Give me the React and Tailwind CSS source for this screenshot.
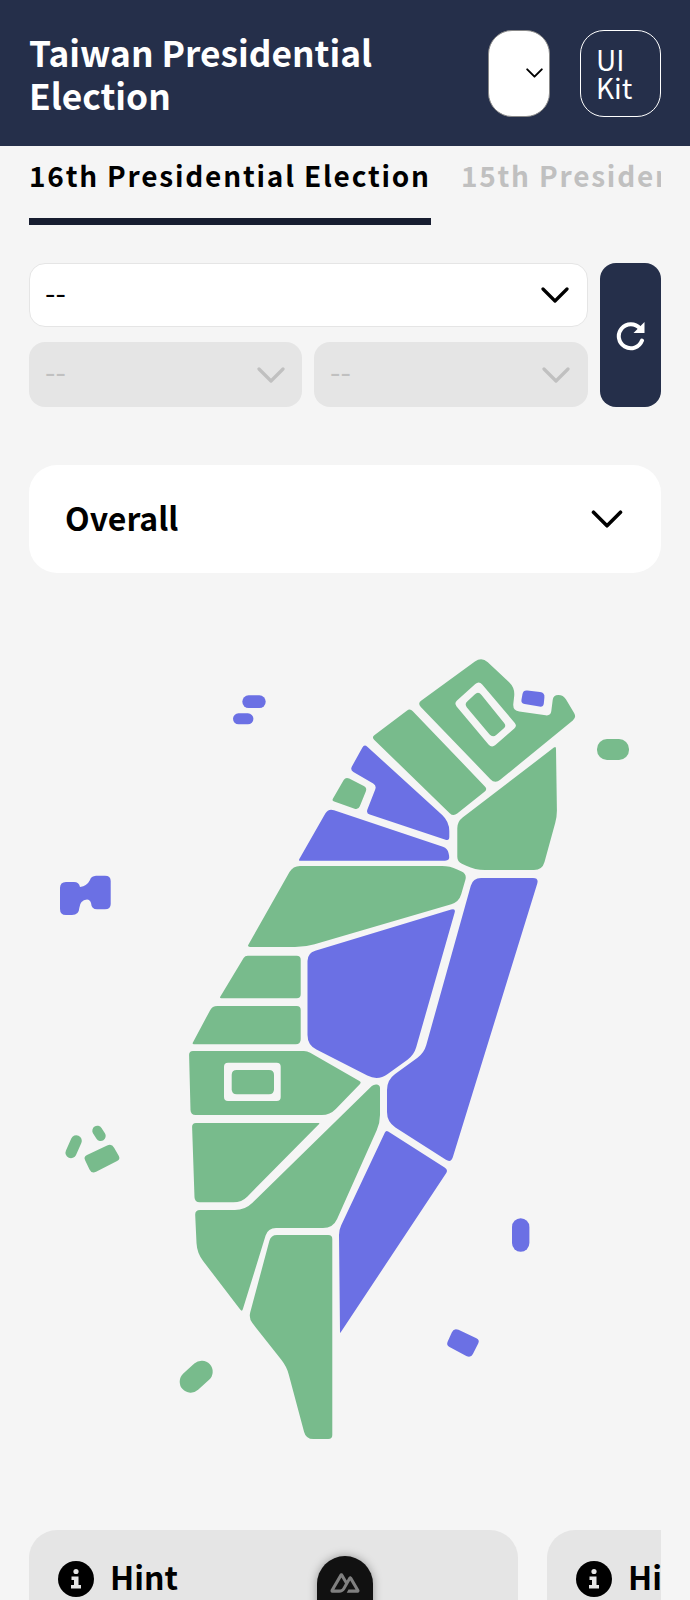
import React from "react";

const GREEN = "#78bb8c";
const BLUE = "#6b70e4";

// points are [x, y, radius], read off a crop at scale s with origin ox, oy
function poly(pts, ox = 0, oy = 0, s = 1) {
  const p = pts.map(([x, y, r]) => [ox + x / s, oy + y / s, r / s]);
  let d = "";
  p.forEach((cur, i) => {
    const prev = p[(i - 1 + p.length) % p.length];
    const next = p[(i + 1) % p.length];
    const l1 = Math.hypot(prev[0] - cur[0], prev[1] - cur[1]);
    const l2 = Math.hypot(next[0] - cur[0], next[1] - cur[1]);
    const r = Math.min(cur[2], l1 / 2, l2 / 2);
    const ax = cur[0] + ((prev[0] - cur[0]) * r) / l1;
    const ay = cur[1] + ((prev[1] - cur[1]) * r) / l1;
    const bx = cur[0] + ((next[0] - cur[0]) * r) / l2;
    const by = cur[1] + ((next[1] - cur[1]) * r) / l2;
    d += `${i === 0 ? "M" : "L"}${ax.toFixed(1)} ${ay.toFixed(1)} Q${cur[0].toFixed(1)} ${cur[1].toFixed(1)} ${bx.toFixed(1)} ${by.toFixed(1)} `;
  });
  return d + "Z";
}

const north = poly([[712,190,15],[905,50,25],[1005,143,25],[998,212,20],[1112,228,15],[1120,165,20],[1150,165,25],[1190,232,15],[945,432,20]], 180, 640, 3);
const northHole = poly([[822,190,12],[897,122,15],[1012,258,12],[935,325,15]], 180, 640, 3);
const northInner = poly([[853,193,12],[895,153,15],[980,258,12],[938,294,15]], 180, 640, 3);
const row3 = poly([[57,393,12],[412,393,10],[575,487,8],[480,585,25],[62,585,15]], 170, 920, 3);
const row3Hole = poly([[162,428,12],[332,428,12],[332,543,12],[162,543,12]], 170, 920, 3);
const row3Inner = poly([[185,450,15],[312,450,15],[312,523,15],[185,523,15]], 170, 920, 3);

const greens = [
  poly([[575,292,10],[690,205,12],[923,448,12],[820,530,15]], 180, 640, 3),
  poly([[497,410,12],[562,443,12],[535,510,12],[455,482,8]], 180, 640, 3),
  poly([[1128,318,8],[1131,530,20],[1087,690,25],[885,690,30],[832,665,15],[832,545,20]], 180, 640, 3),
  poly([[293,866,7],[450,866,8],[467,874,6],[459,902,8],[305,947,10],[247,947,3]]),
  poly([[225,107,8],[392,107,12],[392,235,12],[148,235,6]], 170, 920, 3),
  poly([[127,258,15],[392,258,12],[392,373,15],[66,373,6]], 170, 920, 3),
  poly([[66,9,12],[450,9,4],[215,247,25],[74,247,15]], 170, 1120, 3),
  poly([[195,1210,5],[245,1210,10],[374,1084,8],[380,1085,6],[380,1123,8],[333,1228,10],[268,1228,8],[242,1312,3],[197,1253,10]]),
  poly([[303,345,18],[487,345,12],[487,957,12],[408,957,22],[350,740,25],[236,595,18]], 170, 1120, 3),
  poly([[130,170,12],[215,130,15],[242,178,12],[155,222,15]], 40, 1100, 3),
];

const blues = [
  poly([[553,312,12],[808,545,30],[808,603,12],[558,520,12],[590,437,12],[510,390,12]], 180, 640, 3),
  poly([[445,505,18],[803,625,15],[810,662,15],[355,662,5]], 180, 640, 3),
  poly([[473,878,8],[539,878,6],[451,1163,6],[387,1122,10],[387,1080,10],[424,1053,8]]),
  poly([[456,908,5],[307.5,953,8],[307.5,1045,10],[378,1081,12],[414,1055,8]]),
  poly([[648,30,8],[835,150,12],[510,640,3],[507,330,15]], 170, 1120, 3),
  poly([[1030,150,12],[1095,158,15],[1090,202,12],[1022,190,12]], 180, 640, 3),
  poly([[72,413,15],[150,450,12],[122,505,15],[48,465,12]], 430, 1190, 3),
];

function Chevron({ className, w = 28, h = 16 }) {
  return (
    <svg width={w} height={h} viewBox="0 0 28 16" fill="none" className={className}>
      <path d="M2 2 L14 14 L26 2" stroke="currentColor" strokeWidth="3.2" strokeLinecap="round" strokeLinejoin="round" />
    </svg>
  );
}

function InfoIcon() {
  return (
    <svg width="36" height="36" viewBox="0 0 36 36" className="shrink-0">
      <circle cx="18" cy="18" r="18" fill="#000" />
      <circle cx="18" cy="10.5" r="2.6" fill="#e5e5e5" />
      <path d="M13.5 15.5 H20.5 V24 H23 V27.5 H13 V24 H16 V19 H13.5 Z" fill="#e5e5e5" />
    </svg>
  );
}

function HintCard({ className }) {
  return (
    <div className={`h-[120px] shrink-0 rounded-[28px] bg-[#e5e5e5] px-[29px] pt-[28px] ${className}`}>
      <div className="flex items-center gap-[16px]">
        <InfoIcon />
        <span className="pb-[6px] text-[32px] font-bold leading-[36px]">Hint</span>
      </div>
    </div>
  );
}

export default function App() {
  return (
    <div
      className="relative h-[1600px] overflow-hidden bg-[#f5f5f5] text-black"
      style={{ fontFamily: '"Noto Sans CJK TC", "Noto Sans", sans-serif' }}
    >
      {/* header */}
      <header className="flex h-[146px] items-center justify-between bg-[#252f4a] pl-[29px] pr-[29px] text-white">
        <h1 className="w-[400px] text-[35.3px] font-bold leading-[43px]">Taiwan Presidential Election</h1>
        <div className="flex gap-[30px]">
          <div className="flex h-[87px] w-[62px] items-center justify-end rounded-[24px] border border-[#888] bg-white pr-[6px] text-black">
            <Chevron w={17} h={10} />
          </div>
          <div className="flex h-[87px] w-[81px] items-center rounded-[24px] border border-white pl-[15px] text-[28px] leading-[28px] font-normal">
            UI
            <br />
            Kit
          </div>
        </div>
      </header>

      {/* tabs */}
      <div className="mx-[29px] flex h-[79px] gap-[30px] overflow-hidden">
        <div className="h-full shrink-0 border-b-[7px] border-[#171d30] pt-[8px] text-[28px] font-bold leading-[42px] tracking-[1.8px] whitespace-nowrap">
          16th Presidential Election
        </div>
        <div className="shrink-0 pt-[8px] text-[28px] font-bold leading-[42px] tracking-[1.8px] whitespace-nowrap text-[#c0c0c0]">
          15th Presidential Election
        </div>
      </div>

      {/* selects */}
      <div className="mx-[29px] mt-[38px] flex gap-[12px]">
        <div className="flex w-[559px] flex-col gap-[15px]">
          <div className="flex h-[64px] items-center justify-between rounded-[16px] border border-[#e5e5e5] bg-white pl-[15px] pr-[18px] text-[30px]">
            <span className="pb-[8px]">--</span>
            <Chevron />
          </div>
          <div className="flex gap-[12px]">
            <div className="flex h-[65px] w-[273px] items-center justify-between rounded-[16px] bg-[#e5e5e5] pl-[16px] pr-[17px] text-[30px] text-[#c0c0c0]">
              <span className="pb-[8px]">--</span>
              <Chevron />
            </div>
            <div className="flex h-[65px] w-[274px] items-center justify-between rounded-[16px] bg-[#e5e5e5] pl-[16px] pr-[18px] text-[30px] text-[#c0c0c0]">
              <span className="pb-[8px]">--</span>
              <Chevron />
            </div>
          </div>
        </div>
        <div className="flex w-[61px] items-center justify-center rounded-[16px] bg-[#252f4a]">
          <svg width="32" height="32" viewBox="0 0 32 32" fill="none">
            <path d="M25 9.5 A12 12 0 1 0 27 21.5" stroke="#fff" strokeWidth="4" strokeLinecap="round" />
            <path d="M29.5 3 V14 H18.5 Z" fill="#fff" />
          </svg>
        </div>
      </div>

      {/* overall */}
      <div className="mx-[29px] mt-[58px] flex h-[108px] items-center justify-between rounded-[28px] bg-white pl-[36px] pr-[38px]">
        <span className="pb-[4px] text-[32px] font-bold leading-[44px]">Overall</span>
        <Chevron w={32} h={18} />
      </div>

      {/* map */}
      <svg width="690" height="957" viewBox="0 573 690 957" className="block">
        <path d={north + " " + northHole} fill={GREEN} fillRule="evenodd" />
        <path d={northInner} fill={GREEN} />
        <path d={row3 + " " + row3Hole} fill={GREEN} fillRule="evenodd" />
        <path d={row3Inner} fill={GREEN} />
        {greens.map((d, i) => (
          <path key={i} d={d} fill={GREEN} />
        ))}
        {blues.map((d, i) => (
          <path key={i} d={d} fill={BLUE} />
        ))}
        <rect x="597" y="739" width="32" height="21" rx="10" fill={GREEN} />
        <line x1="76.3" y1="1140.7" x2="71" y2="1152.7" stroke={GREEN} strokeWidth="11" strokeLinecap="round" />
        <line x1="97.3" y1="1130.7" x2="100.7" y2="1136" stroke={GREEN} strokeWidth="10" strokeLinecap="round" />
        <line x1="190.7" y1="1381.7" x2="201.7" y2="1371.7" stroke={GREEN} strokeWidth="22" strokeLinecap="round" />
        <rect x="242.3" y="695.3" width="23.4" height="12.7" rx="6.3" fill={BLUE} />
        <rect x="233" y="713.3" width="20.4" height="11" rx="5.5" fill={BLUE} />
        <rect x="512" y="1218.3" width="17.4" height="33.4" rx="8.7" fill={BLUE} />
        <path
          d="M60 888 Q60 882 66 882 L74 882 Q79 882 80 887 Q87 886 90 880 Q91 876 96 875.7 L105 875.7 Q110.7 875.7 110.7 881 L110.7 904 Q110.7 909.3 105 909.3 L97 909.3 Q91.5 909.3 91 903 Q90 899.5 87 899.5 Q80 900 79.3 908 Q79 915 72 915 L66 915 Q60 915 60 909 Z"
          fill={BLUE}
        />
      </svg>

      {/* hints */}
      <div className="mx-[29px] flex gap-[29px] overflow-hidden">
        <HintCard className="w-[489px]" />
        <HintCard className="w-[489px]" />
      </div>

      {/* nuxt devtools button */}
      <div className="absolute left-[317px] top-[1556px] flex h-[90px] w-[56px] justify-center rounded-t-[28px] bg-[#111] pt-[17px] shadow-[0_0_10px_rgba(0,0,0,0.35)]">
        <svg width="30" height="20" viewBox="40 110 432 292">
          <path
            d="M281.44 397.667H438.32C443.326 397.667 448.118 395.908 452.453 393.427C456.789 390.946 461.258 387.831 463.76 383.533C466.262 379.236 468.002 374.36 468 369.399C467.998 364.437 466.266 359.563 463.76 355.268L357.76 172.947C355.258 168.65 352.201 165.534 347.867 163.053C343.532 160.573 337.325 158.813 332.32 158.813C327.315 158.813 322.521 160.573 318.187 163.053C313.852 165.534 310.795 168.65 308.293 172.947L281.44 219.587L227.733 129.13C225.229 124.834 222.176 120.307 217.84 117.827C213.504 115.346 208.713 115 203.707 115C198.701 115 193.909 115.346 189.573 117.827C185.238 120.307 180.771 124.834 178.267 129.13L46.8267 355.268C44.3208 359.563 44.0022 364.437 44 369.399C43.9978 374.36 44.3246 379.235 46.8267 383.533C49.3288 387.83 53.7979 390.946 58.1333 393.427C62.4688 395.908 67.2603 397.667 72.2667 397.667H171.2C210.401 397.667 238.934 380.082 258.827 346.787L306.88 263.4L332.32 219.587L410.053 352.44H306.88L281.44 397.667ZM169.787 352.44H100.533L203.707 174.36L256 263.4L221.361 323.784C208.151 345.387 193.089 352.44 169.787 352.44Z"
            fill="#808080"
          />
        </svg>
      </div>
    </div>
  );
}
